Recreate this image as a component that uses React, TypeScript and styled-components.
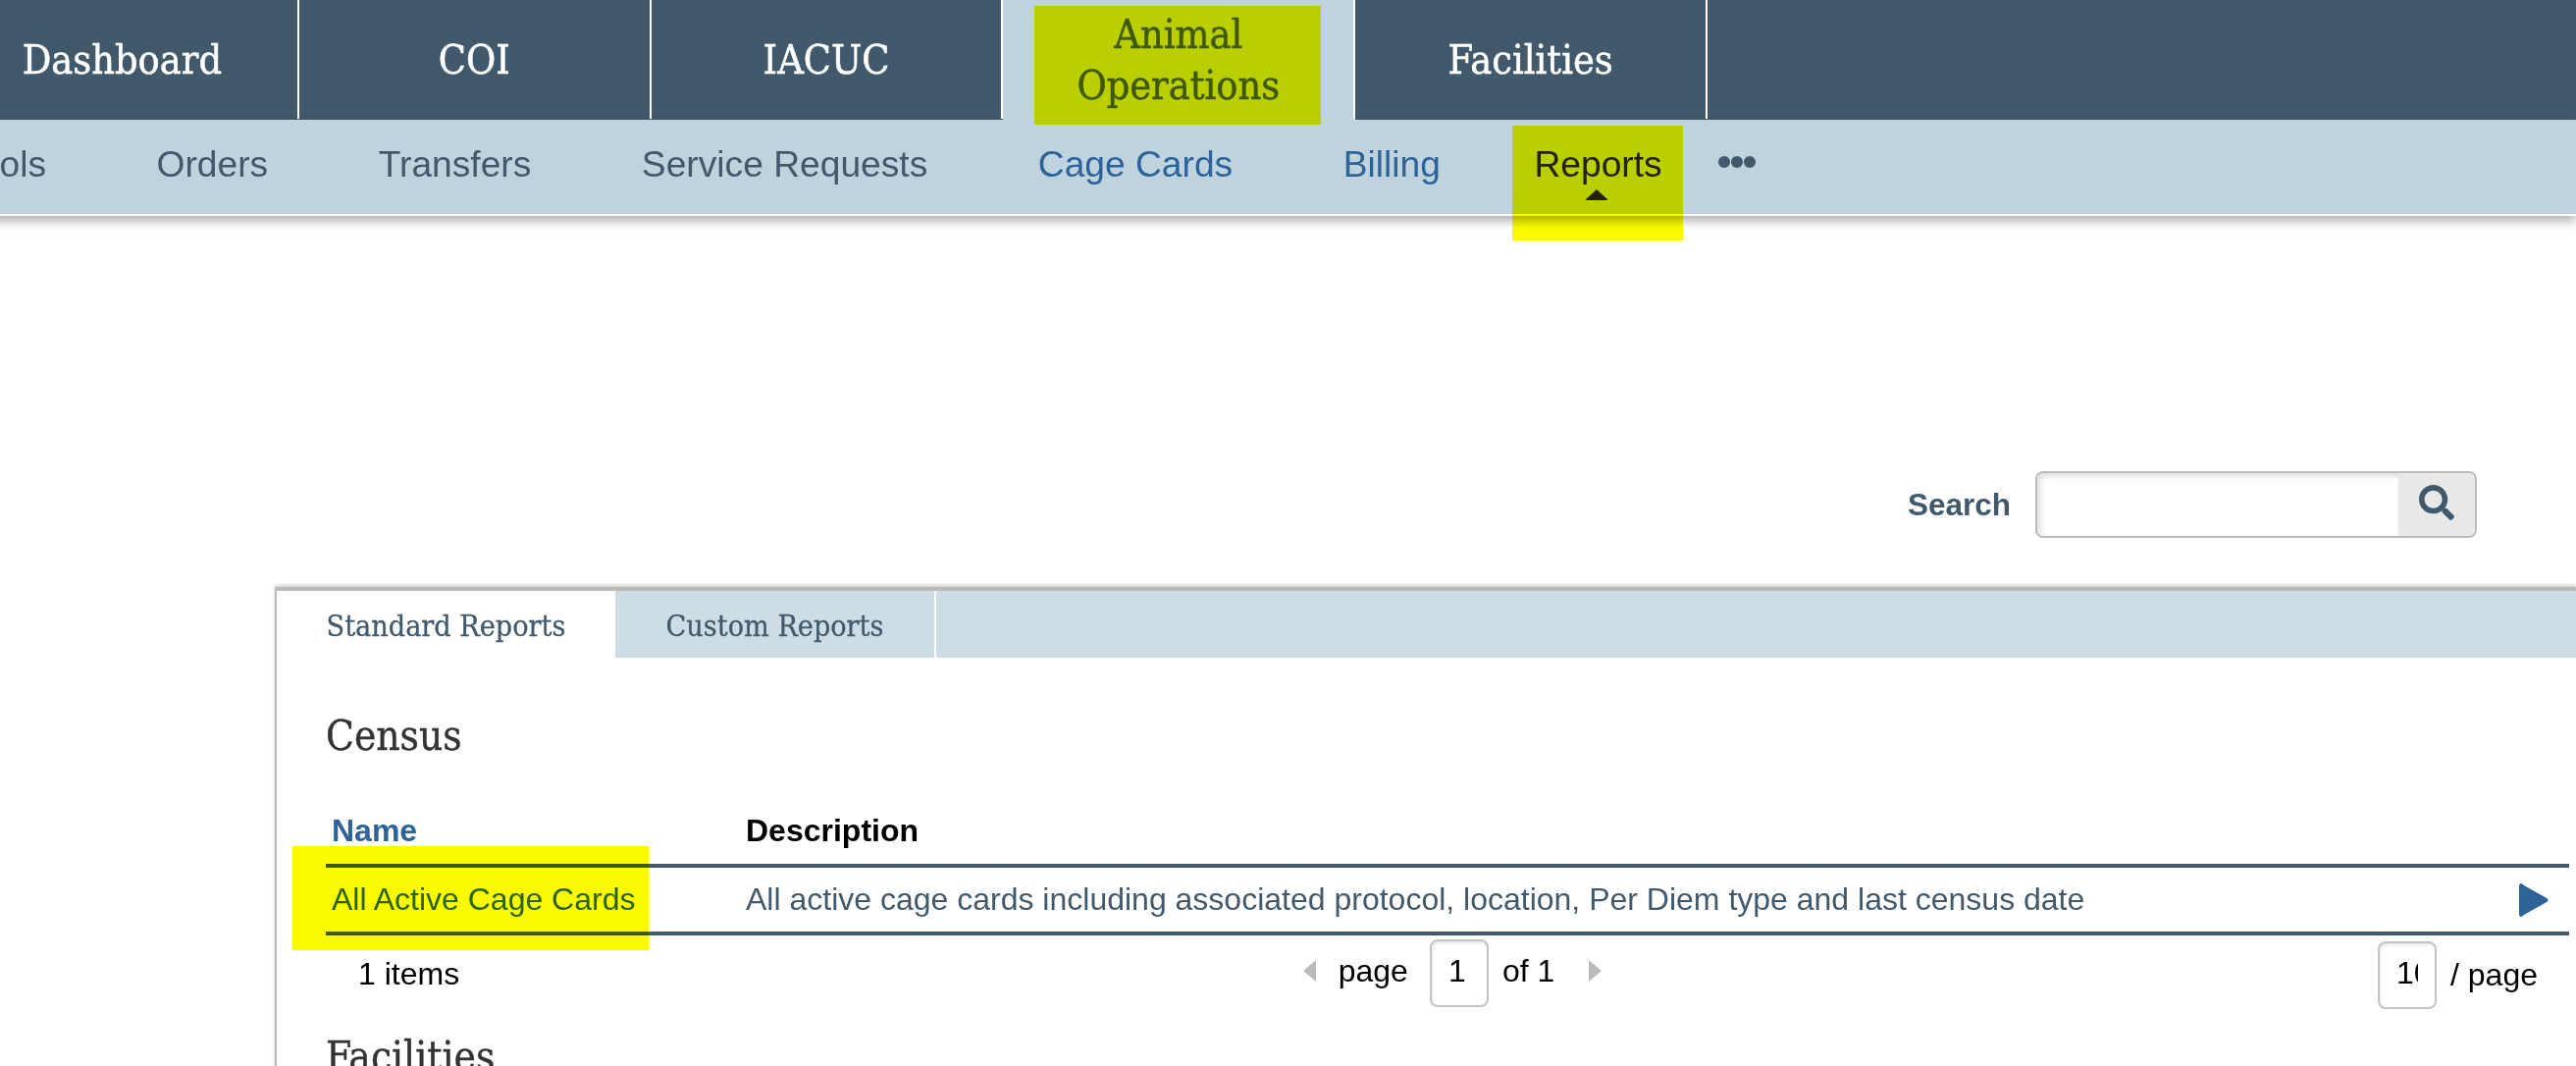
import React from 'react'
import styled, { createGlobalStyle } from 'styled-components'
import { FaSearch } from 'react-icons/fa'

const SLAB = '"DejaVu Serif Condensed", "DejaVu Serif", serif'
const SANS = '"Liberation Sans", Arial, sans-serif'

const GlobalStyle = createGlobalStyle`
  html, body {
    margin: 0;
    padding: 0;
    background: #fff;
    overflow: hidden;
  }
  * {
    box-sizing: border-box;
  }
`

const Page = styled.div`
  width: 2625px;
  height: 1086px;
  overflow: hidden;
  background: #fff;
  font-family: ${SANS};
  font-size: 32px;
`

const Highlight = styled.span`
  position: absolute;
  background: #fafb00;
  mix-blend-mode: multiply;
  pointer-events: none;
`

const TopNav = styled.nav`
  display: flex;
  height: 122px;
  background: #41596b;
`

const TopTabs = styled.div`
  display: flex;
  margin-left: -54px;
  height: 121px;
`

const TopTab = styled.a<{ $active?: boolean }>`
  position: relative;
  width: 358.8px;
  height: ${({ $active }) => ($active ? '122px' : '121px')};
  display: flex;
  align-items: center;
  justify-content: center;
  padding: 0 40px;
  border-right: 2px solid #fff;
  background: ${({ $active }) => ($active ? '#bed3de' : 'transparent')};
  color: ${({ $active }) => ($active ? '#41596b' : '#fff')};
  font-family: ${SLAB};
  font-size: 41px;
  line-height: 52px;
  text-align: center;
  -webkit-text-stroke: 0.5px currentColor;
`

const AnimalHighlight = styled(Highlight)`
  left: 32px;
  top: 6px;
  width: 292px;
  height: 121px;
`

const SubNav = styled.nav`
  display: flex;
  align-items: flex-start;
  gap: 112.5px;
  height: 98px;
  padding-top: 24px;
  margin-left: -108px;
  width: 2733px;
  background: #bed3de;
  border-bottom: 2px solid #fff;
  box-shadow: 0 5px 10px rgba(0, 0, 0, 0.32);
  font-size: 37.2px;
  line-height: 42px;
`

const SubLink = styled.a<{ $link?: boolean }>`
  color: ${({ $link }) => ($link ? '#2e6399' : '#41596b')};
  white-space: nowrap;
`

const ActiveSubLink = styled.a`
  position: relative;
  margin-left: -17px;
  color: #222;
  white-space: nowrap;
`

const ReportsHighlight = styled(Highlight)`
  left: -22px;
  top: -18px;
  width: 174px;
  height: 117px;
`

const Caret = styled.svg`
  position: absolute;
  left: 52px;
  top: 46px;
  width: 24px;
  height: 12px;
`

const MoreDots = styled.div`
  display: flex;
  gap: 1px;
  margin-left: -55px;
  padding-top: 13px;
`

const Dot = styled.span`
  width: 12px;
  height: 12px;
  border-radius: 50%;
  background: #41596b;
`

const SearchRow = styled.div`
  display: flex;
  justify-content: flex-end;
  align-items: center;
  gap: 25px;
  margin-top: 260px;
  padding-right: 101px;
  height: 68px;
`

const SearchLabel = styled.label`
  font-weight: 700;
  font-size: 31.5px;
  color: #41596b;
`

const SearchBox = styled.div`
  display: flex;
  width: 450px;
  height: 68px;
  border: 2px solid #bbb;
  border-radius: 8px;
  overflow: hidden;
`

const SearchInput = styled.input`
  flex: 1;
  min-width: 0;
  border: 0;
  outline: 0;
  box-shadow: inset 3px 3px 6px rgba(0, 0, 0, 0.14);
`

const SearchButton = styled.div`
  width: 78px;
  display: flex;
  align-items: center;
  justify-content: center;
  padding-bottom: 4px;
  background: #e8e8e8;
  color: #41596b;
`

const Panel = styled.section`
  margin-top: 50px;
  margin-left: 280px;
  width: 2345px;
  height: 600px;
  border-top: 4px solid #bbb;
  border-left: 2px solid #bbb;
  box-shadow: 0 -2px 3px rgba(0, 0, 0, 0.18);
`

const TabBar = styled.div`
  display: flex;
  height: 68px;
  background: #cedde5;
`

const PanelTab = styled.div<{ $active?: boolean }>`
  display: flex;
  align-items: center;
  justify-content: center;
  width: ${({ $active }) => ($active ? '345px' : '327px')};
  height: 68px;
  padding-top: 2px;
  background: ${({ $active }) => ($active ? '#fff' : 'transparent')};
  border-right: ${({ $active }) => ($active ? '0' : '2px solid #fff')};
  color: #41596b;
  font-family: ${SLAB};
  font-size: 30.2px;
  -webkit-text-stroke: 0.3px currentColor;
`

const PanelBody = styled.div`
  padding-left: 50px;
  width: 2336px;
`

const SectionTitle = styled.h2`
  margin: 0;
  padding-top: 56px;
  height: 150px;
  color: #333;
  font-family: ${SLAB};
  font-size: 42px;
  font-weight: 400;
  line-height: 48px;
  -webkit-text-stroke: 0.4px currentColor;
`

const TableHead = styled.div`
  display: grid;
  grid-template-columns: 428px 1fr;
  height: 64px;
  padding-top: 8px;
  border-bottom: 4px solid #41596b;
  font-weight: 700;
  line-height: 37px;
`

const NameHead = styled.a`
  padding-left: 6px;
  color: #2e6399;
`

const DescriptionHead = styled.span`
  color: #000;
`

const TableRow = styled.div`
  display: grid;
  grid-template-columns: 428px 1fr 30px;
  align-items: center;
  height: 69px;
  padding-right: 21px;
  border-bottom: 4px solid #41596b;
  color: #41596b;
`

const NameCell = styled.a`
  position: relative;
  padding-left: 6px;
  color: #2e6399;
  line-height: 37px;
`

const RowHighlight = styled(Highlight)`
  left: -34px;
  top: -36px;
  width: 363px;
  height: 106px;
`

const RowArrow = styled.svg`
  width: 30px;
  height: 34px;
`

const Footer = styled.div`
  display: grid;
  grid-template-columns: 1fr auto 1fr;
  align-items: start;
  padding-top: 4px;
  color: #000;
`

const ItemsCount = styled.span`
  padding-left: 33px;
  padding-top: 17px;
  line-height: 37px;
`

const Pager = styled.div`
  display: flex;
  align-items: center;
  height: 69px;
  margin-left: 10px;
`

const PagerArrow = styled.svg<{ $side: 'left' | 'right' }>`
  width: 13px;
  height: 22px;
  margin: ${({ $side }) => ($side === 'left' ? '-6px 23px 0 0' : '-6px 0 0 35px')};
`

const PagerText = styled.span`
  margin-top: -4px;
`

const PageInput = styled.input`
  width: 60px;
  height: 69px;
  margin: 0 14px 0 22px;
  padding: 0 17px 4px 17px;
  border: 2px solid #c4c4c4;
  border-radius: 8px;
  outline: 0;
  box-shadow: inset 1px 2px 3px rgba(0, 0, 0, 0.1);
  color: #000;
  font-family: ${SANS};
  font-size: 32px;
`

const PerPage = styled.div`
  display: flex;
  align-items: center;
  justify-content: flex-end;
  gap: 14px;
  padding-right: 32px;
  padding-top: 2px;
`

const PerPageInput = styled(PageInput)`
  margin: 0;
`

const NextTitle = styled(SectionTitle)`
  padding-top: 25px;
`

const App = () => {
  return (
    <Page>
      <GlobalStyle />
      <TopNav>
        <TopTabs>
          <TopTab>Dashboard</TopTab>
          <TopTab>COI</TopTab>
          <TopTab>IACUC</TopTab>
          <TopTab $active>
            Animal Operations
            <AnimalHighlight />
          </TopTab>
          <TopTab>Facilities</TopTab>
        </TopTabs>
      </TopNav>
      <SubNav>
        <SubLink>Protocols</SubLink>
        <SubLink>Orders</SubLink>
        <SubLink>Transfers</SubLink>
        <SubLink>Service Requests</SubLink>
        <SubLink $link>Cage Cards</SubLink>
        <SubLink $link>Billing</SubLink>
        <ActiveSubLink>
          Reports
          <Caret viewBox="0 0 24 12">
            <path d="M12 1 L23 11 Q23.500 12 22 12 L2 12 Q0.500 12 1 11 Z" fill="#222" />
          </Caret>
          <ReportsHighlight />
        </ActiveSubLink>
        <MoreDots>
          <Dot />
          <Dot />
          <Dot />
        </MoreDots>
      </SubNav>
      <SearchRow>
        <SearchLabel>Search</SearchLabel>
        <SearchBox>
          <SearchInput />
          <SearchButton>
            <FaSearch size={36} />
          </SearchButton>
        </SearchBox>
      </SearchRow>
      <Panel>
        <TabBar>
          <PanelTab $active>Standard Reports</PanelTab>
          <PanelTab>Custom Reports</PanelTab>
        </TabBar>
        <PanelBody>
          <SectionTitle>Census</SectionTitle>
          <TableHead>
            <NameHead>Name</NameHead>
            <DescriptionHead>Description</DescriptionHead>
          </TableHead>
          <TableRow>
            <NameCell>
              All Active Cage Cards
              <RowHighlight />
            </NameCell>
            <span>All active cage cards including associated protocol, location, Per Diem type and last census date</span>
            <RowArrow viewBox="0 0 30 34">
              <path d="M2 0 Q0 0 0 3 L0 31 Q0 34 2 34 Q3 34 5 32 L29 18.500 Q30 17 29 15.500 L5 2 Q3 0 2 0 Z" fill="#2e6399" />
            </RowArrow>
          </TableRow>
          <Footer>
            <ItemsCount>1 items</ItemsCount>
            <Pager>
              <PagerArrow $side="left" viewBox="0 0 13 22">
                <path d="M13 0 L0 11 L13 22 Z" fill="#bbb" />
              </PagerArrow>
              <PagerText>page</PagerText>
              <PageInput readOnly defaultValue="1" />
              <PagerText>of 1</PagerText>
              <PagerArrow $side="right" viewBox="0 0 13 22">
                <path d="M0 0 L13 11 L0 22 Z" fill="#bbb" />
              </PagerArrow>
            </Pager>
            <PerPage>
              <PerPageInput readOnly defaultValue="10" />
              <span>/ page</span>
            </PerPage>
          </Footer>
          <NextTitle>Facilities</NextTitle>
        </PanelBody>
      </Panel>
    </Page>
  )
}

export default App
